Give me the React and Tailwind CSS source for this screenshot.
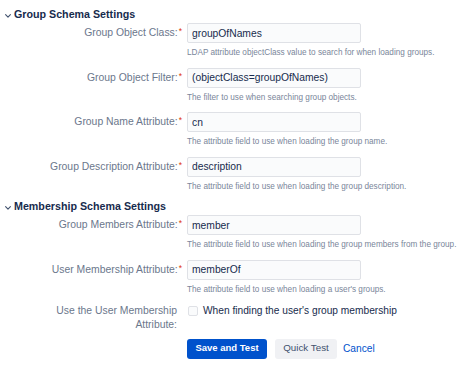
import React from "react";

const groupFields = [
  {
    label: "Group Object Class:",
    value: "groupOfNames",
    help: "LDAP attribute objectClass value to search for when loading groups.",
  },
  {
    label: "Group Object Filter:",
    value: "(objectClass=groupOfNames)",
    help: "The filter to use when searching group objects.",
  },
  {
    label: "Group Name Attribute:",
    value: "cn",
    help: "The attribute field to use when loading the group name.",
  },
  {
    label: "Group Description Attribute:",
    value: "description",
    help: "The attribute field to use when loading the group description.",
  },
];

const membershipFields = [
  {
    label: "Group Members Attribute:",
    value: "member",
    help: "The attribute field to use when loading the group members from the group.",
  },
  {
    label: "User Membership Attribute:",
    value: "memberOf",
    help: "The attribute field to use when loading a user's groups.",
  },
];

function SectionHeading({ title, className = "" }) {
  return (
    <div className={`flex items-center h-[16px] ${className}`}>
      <svg width="6" height="4" viewBox="0 0 6 4" className="ml-[5px] mr-[3px] mt-[3px]">
        <path d="M0.6 0.6 L3 3.1 L5.4 0.6" fill="none" stroke="#42526e" strokeWidth="1.1" strokeLinecap="round" strokeLinejoin="round" />
      </svg>
      <h3 className="text-[10.7px] font-bold text-[#172b4d] leading-[16px]">{title}</h3>
    </div>
  );
}

function Field({ label, value, help }) {
  return (
    <div className="mb-[8.5px]">
      <div className="flex items-center h-[20px]">
        <label className="w-[182px] shrink-0 text-right text-[10.4px] text-[#6b778c] leading-[14px]">
          {label}
          <span className="text-[#de350b] ml-[1px] relative -top-[2px] text-[8.5px]">*</span>
        </label>
        <input
          readOnly
          value={value}
          className="ml-[5px] w-[174px] h-[20px] px-[4px] bg-[#fafbfc] border border-[#dfe1e6] rounded-[2px] text-[10.3px] text-[#172b4d] outline-none"
        />
      </div>
      <p className="mt-[4px] ml-[187px] text-[8.2px] leading-[12px] text-[#7a869a]">{help}</p>
    </div>
  );
}

export default function App() {
  return (
    <div className="w-[474px] h-[373px] bg-white pt-[6px] overflow-hidden" style={{ fontFamily: '"Liberation Sans", Arial, sans-serif' }}>
      <SectionHeading title="Group Schema Settings" className="mb-[1px]" />
      {groupFields.map((f) => (
        <Field key={f.label} {...f} />
      ))}

      <SectionHeading title="Membership Schema Settings" className="-mt-[3px] mb-[1px]" />
      {membershipFields.map((f) => (
        <Field key={f.label} {...f} />
      ))}

      {/* Checkbox row */}
      <div className="flex items-start -mt-[0.5px]">
        <div className="w-[182px] shrink-0 text-right text-[10.4px] text-[#6b778c] leading-[14px] pl-[40px] pr-[5px]">
          Use the User Membership Attribute:
        </div>
        <label className="ml-[5px] flex items-center h-[14px] gap-[5px] text-[10.2px] text-[#172b4d]">
          <span className="w-[10px] h-[10px] rounded-[2px] border border-[#dfe1e6] bg-[#fafbfc] ml-[1px]" />
          When finding the user's group membership
        </label>
      </div>

      {/* Buttons */}
      <div className="flex items-center ml-[187px] mt-[7px] gap-[8px]">
        <button className="h-[20px] w-[80px] rounded-[3px] bg-[#0052cc] text-white text-[9.5px] font-bold">
          Save and Test
        </button>
        <button className="h-[20px] w-[62px] rounded-[3px] bg-[#f0f1f4] text-[#42526e] text-[9.8px]">
          Quick Test
        </button>
        <button className="text-[#0052cc] text-[10.2px] ml-[-2px]">Cancel</button>
      </div>
    </div>
  );
}
